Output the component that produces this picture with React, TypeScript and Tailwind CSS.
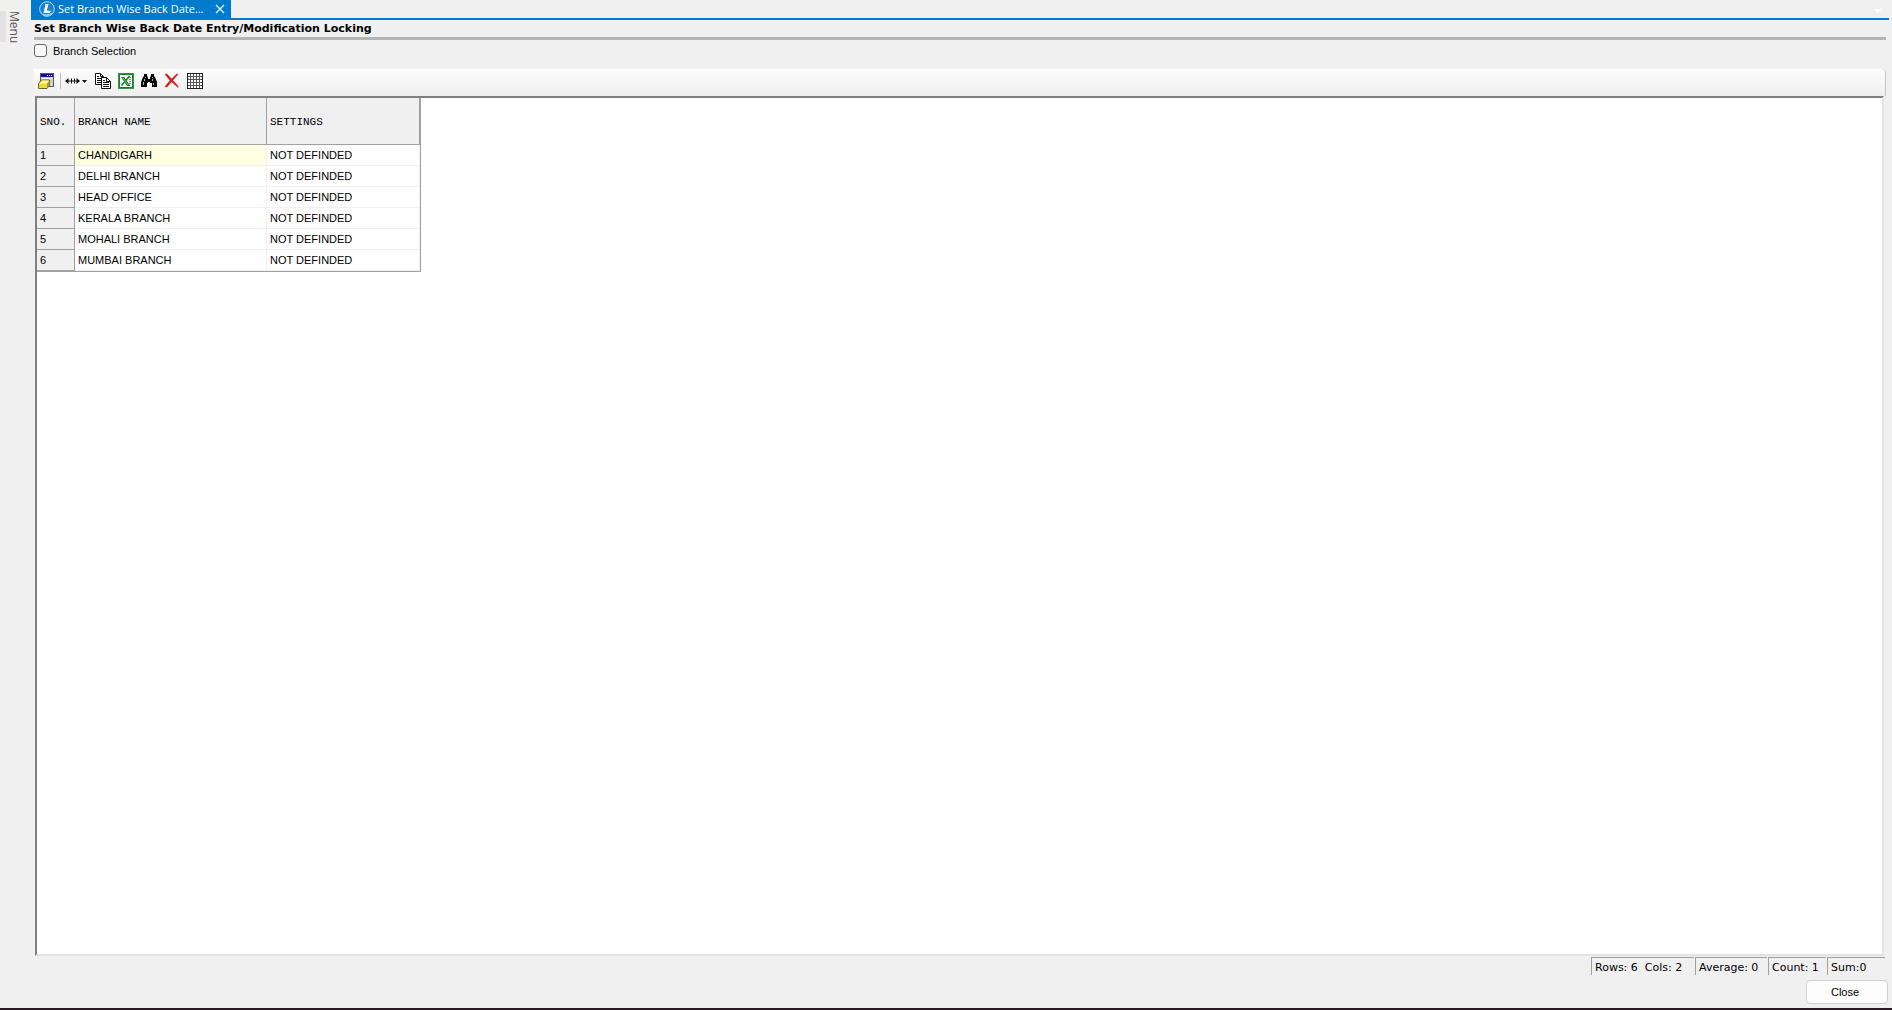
import React, { useState } from 'react';

interface Branch {
  id: number;
  name: string;
  settings: string;
}

const branches: Branch[] = [
  { id: 1, name: 'CHANDIGARH', settings: 'NOT DEFINDED' },
  { id: 2, name: 'DELHI BRANCH', settings: 'NOT DEFINDED' },
  { id: 3, name: 'HEAD OFFICE', settings: 'NOT DEFINDED' },
  { id: 4, name: 'KERALA BRANCH', settings: 'NOT DEFINDED' },
  { id: 5, name: 'MOHALI BRANCH', settings: 'NOT DEFINDED' },
  { id: 6, name: 'MUMBAI BRANCH', settings: 'NOT DEFINDED' },
];

function LogoIcon() {
  return (
    <svg width="16" height="16" viewBox="0 0 16 16">
      <circle cx="8" cy="8" r="7.3" fill="#1583cf" stroke="#b9dcf3" strokeWidth="1" />
      <path d="M2.500 12.500A7 7 0 0 0 14 11.500Q8 14.500 2.500 12.500Z" fill="#8fd0f5" />
      <path d="M6.500 3h3L7.800 9.800h4L11 12H4.500Z" fill="#fff" />
    </svg>
  );
}

function FormIcon() {
  return (
    <svg width="16" height="16" viewBox="0 0 16 16">
      <g shapeRendering="crispEdges">
        <path d="M2 0h14v14H2z" fill="#5a5a5a" />
        <path d="M3 1h12v12H3z" fill="#d0d0d0" />
        <path d="M3 1h12v3H3z" fill="#10108c" />
        <path d="M9 2h1v1H9zM11 2h1v1h-1zM13 2h1v1h-1z" fill="#fff" />
        <path d="M4 5h10v1H4z" fill="#fff" />
      </g>
      <path d="M.5 10.500 3.500 7h8v5L9 15.500H.5Z" fill="#e8dc3c" stroke="#4c480c" strokeWidth=".8" />
      <path d="M1.500 10.500 4 7.500h7L8.800 10.500Z" fill="#fffba0" />
      <path d="M9 11l2.300-3v4L9 15Z" fill="#a89e18" />
    </svg>
  );
}

function WidthIcon() {
  return (
    <svg width="23" height="16" viewBox="0 0 23 16" fill="#111">
      <path d="M0 8l3.500-3v2.500H6V5.500h1v2h2v-2h1v2h1.500V5L15 8l-3.500 3V8.500H10v2H9v-2H7v2H6v-2H3.500V11Z" />
      <path d="M17 7h5l-2.500 3Z" />
    </svg>
  );
}

function CopyIcon() {
  return (
    <svg width="16" height="16" viewBox="0 0 16 16" fill="#fff" stroke="#111">
      <path d="M.5.5h5l3 3v8h-8Z" />
      <path d="M5.500.5v3h3M2 3.500h2M2 5.500h5M2 7.500h5M2 9.500h5" fill="none" />
      <path d="M6.500 4.500h5l4 4v7h-9Z" />
      <path d="M11.500 4.500v4h4M8 7.500h2M8 9.500h6M8 11.500h6M8 13.500h6" fill="none" />
    </svg>
  );
}

function ExcelIcon() {
  return (
    <svg width="16" height="16" viewBox="0 0 16 16">
      <path d="M0 0h16v16H0z" fill="#168026" />
      <path d="M.5.5h15v15H.5z" fill="none" stroke="#5fa768" strokeDasharray="1 1" />
      <path d="M2 2h12v12H2z" fill="#fff" />
      <path d="M10 4.500h3M11 6.500h2M11 8.500h2M11 10.500h2" stroke="#5fa768" />
      <path d="M3 4h3.200L12.500 13H9Z" fill="#168026" />
      <path d="m11.500 3-8 9.500" stroke="#168026" strokeWidth="1.600" />
      <path d="m4.800 4.800 5.400 7.400" stroke="#a9d5ae" strokeWidth=".7" />
    </svg>
  );
}

function FindIcon() {
  return (
    <svg width="16" height="16" viewBox="0 0 16 16" fill="#0b0b0b">
      <path d="M3 1h3v2l1 1v2h2V4l1-1V1h3v2l1 1 2 5v5h-5v-4H9V9H7v1H6v4H0V9l2-5 1-1Z" />
      <path d="M4 4h1v1H4zM3 6h1v2H3zM2 9h1v3H2zM11 4h1v1h-1zM11 6h1v2h-1zM12 10h1v2h-1z" fill="#b5b5b5" />
    </svg>
  );
}

function DeleteIcon() {
  return (
    <svg width="16" height="16" viewBox="0 0 16 16">
      <path d="M1 1.200 3 1l4.500 5L13 .8l1 .5-5.200 6L14 13l-.8.8L7.600 8.800 3 14l-2-.4L6 7.500Z" fill="#d51a1a" stroke="#d51a1a" strokeWidth=".5" />
      <path d="M13 13h1.500v1.500H13z" fill="#e05050" />
    </svg>
  );
}

function GridIcon() {
  return (
    <svg width="16" height="16" viewBox="0 0 16 16" fill="none" stroke="#222" shapeRendering="crispEdges">
      <path d="M.5.5h15v15H.5z" fill="#fff" />
      <path d="M1 3.500h14M1 6.500h14M1 9.500h14M1 12.500h14M3.500 1v14M6.500 1v14M9.500 1v14M12.500 1v14" stroke="#555" />
    </svg>
  );
}

interface ToolButtonProps {
  label: string;
  children: React.ReactNode;
}

function ToolButton({ label, children }: ToolButtonProps) {
  return (
    <button type="button" aria-label={label} title={label} className="shrink-0">
      {children}
    </button>
  );
}

function TabBar() {
  return (
    <div className="flex items-start justify-between border-b-2 border-[#007acc] mr-[3px]">
      <div className="flex h-[18px] w-[200px] items-center bg-[#007acc] pl-2 pr-[5px] text-white">
        <LogoIcon />
        <span className="ml-[3px] flex-1 whitespace-nowrap font-['Open_Sans',sans-serif] text-[11px] leading-4">
          Set Branch Wise Back Date...
        </span>
        <button type="button" aria-label="Close tab">
          <svg width="12" height="12" viewBox="0 0 12 12" stroke="#d5eafa" strokeWidth="1.500">
            <path d="m2 2 8 8M10 2l-8 8" />
          </svg>
        </button>
      </div>
      <button type="button" aria-label="Open windows" className="mr-[7px] mt-[9px]">
        <svg width="8" height="4" viewBox="0 0 8 4" className="block">
          <path d="M0 0h8L4 4Z" fill="#fff" />
        </svg>
      </button>
    </div>
  );
}

function Toolbar() {
  return (
    <div className="mr-[3px] flex h-[27px] items-center gap-1.5 rounded-tr border-r border-[#c4c4c4] bg-linear-to-b from-[#fdfdfd] to-[#efefef] pl-1 pb-[3px]">
      <ToolButton label="Form"><FormIcon /></ToolButton>
      <div className="h-4 w-px bg-[#bdbdbd]" />
      <div className="-ml-0.5 flex items-center gap-[7px]">
        <ToolButton label="Column width"><WidthIcon /></ToolButton>
        <ToolButton label="Copy"><CopyIcon /></ToolButton>
        <ToolButton label="Export to Excel"><ExcelIcon /></ToolButton>
        <ToolButton label="Find"><FindIcon /></ToolButton>
        <ToolButton label="Delete"><DeleteIcon /></ToolButton>
        <ToolButton label="Grid"><GridIcon /></ToolButton>
      </div>
    </div>
  );
}

function BranchTable() {
  return (
    <table className="w-[384px] table-fixed border-separate border-spacing-0 border-b border-r border-[#a0a0a0] text-left text-[11px] leading-4 text-black">
      <thead>
        <tr className="h-[47px] bg-[#f0f0f0] font-['Liberation_Mono',monospace]">
          <th className="w-[38px] border-b border-r border-[#a0a0a0] pl-[3px] pt-0.5 font-normal">SNO.</th>
          <th className="w-[192px] border-b border-r border-[#a0a0a0] pl-[3px] pt-0.5 font-normal">BRANCH NAME</th>
          <th className="border-b border-r border-[#a0a0a0] pl-[3px] pt-0.5 font-normal">SETTINGS</th>
        </tr>
      </thead>
      <tbody>
        {branches.map((branch, index) => (
          <tr key={branch.id} className="h-[21px]">
            <td className="border-b border-r border-[#a0a0a0] bg-[#f0f0f0] pl-[3px]">{branch.id}</td>
            <td className={`border-b border-r border-[#f0f0f0] pl-[3px] ${index === 0 ? 'bg-[#ffffe1]' : 'bg-white'}`}>
              {branch.name}
            </td>
            <td className="border-b border-r border-[#f0f0f0] bg-white pl-[3px]">{branch.settings}</td>
          </tr>
        ))}
      </tbody>
    </table>
  );
}

function StatusCell({ className, children }: { className: string; children: React.ReactNode }) {
  return (
    <div className={`h-[18px] whitespace-pre border-l border-t border-[#a0a0a0] pl-[3px] pt-0.5 ${className}`}>
      {children}
    </div>
  );
}

export default function App() {
  const [selected, setSelected] = useState(false);

  return (
    <div className="flex h-screen flex-col overflow-hidden border-b-2 border-[#2c1a22] bg-[#f0f0f0] font-['Liberation_Sans',Arial,sans-serif] text-black">
      <div className="flex min-h-0 flex-1">
        <aside className="w-[31px] shrink-0 pt-[11px]">
          <button
            type="button"
            className="flex h-[31px] items-center border-l-[6px] border-[#e2e2e2] font-['Open_Sans',sans-serif] text-[12px] leading-4 text-[#555] [writing-mode:vertical-rl]"
          >
            Menu
          </button>
        </aside>

        <main className="flex min-w-0 flex-1 flex-col">
          <TabBar />
          <div className="flex min-h-0 flex-1 flex-col pl-[3px] pr-[3px]">
            <h1 className="mr-[3px] h-5 border-b-[3px] border-[#b4b4b4] font-['DejaVu_Sans',sans-serif] text-[11px] font-bold leading-[18px]">
              Set Branch Wise Back Date Entry/Modification Locking
            </h1>
            <label className="flex h-[29px] items-start gap-1.5 pt-1 text-[11px] leading-[14px]">
              <input
                type="checkbox"
                checked={selected}
                onChange={(e) => setSelected(e.target.checked)}
                className="size-[13px] appearance-none rounded-[3px] border border-[#666] bg-[#f8f8f8] checked:bg-[#0067c0]"
              />
              Branch Selection
            </label>
            <Toolbar />
            <div className="ml-px mr-[5px] min-h-0 flex-1 overflow-auto border-2 border-b-[#e3e3e3] border-l-[#808080] border-r-[#e3e3e3] border-t-[#808080] bg-white">
              <BranchTable />
            </div>
            <footer className="mr-1 mt-px flex justify-end gap-px font-['DejaVu_Sans',sans-serif] text-[11px] leading-4">
              <StatusCell className="w-[103px]">{'Rows: 6  Cols: 2'}</StatusCell>
              <StatusCell className="w-[72px]">Average: 0</StatusCell>
              <StatusCell className="w-[58px]">Count: 1</StatusCell>
              <StatusCell className="w-[58px]">Sum:0</StatusCell>
            </footer>
            <div className="mr-px flex justify-end pb-1 pt-[5px]">
              <button type="button" className="h-6 w-[82px] rounded border border-[#d0d0d0] bg-[#fdfdfd] pr-1 text-[11px] leading-4">
                Close
              </button>
            </div>
          </div>
        </main>
      </div>
    </div>
  );
}
